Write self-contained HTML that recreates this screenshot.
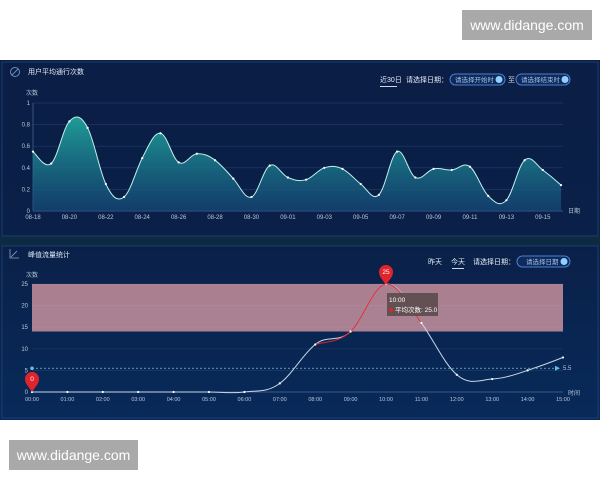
<!DOCTYPE html>
<html><head><meta charset="utf-8"><style>
html,body{margin:0;padding:0;background:#fff;width:600px;height:480px;overflow:hidden}
svg{display:block}
text{font-family:"Liberation Sans","Noto Sans CJK SC",sans-serif}
</style></head><body>
<svg id="s" width="600" height="480" viewBox="0 0 600 480" xmlns="http://www.w3.org/2000/svg">
<defs>
<linearGradient id="bg" x1="0" y1="0" x2="0" y2="1">
<stop offset="0" stop-color="#0b1e45"/><stop offset="0.5" stop-color="#0a2048"/><stop offset="1" stop-color="#082a5a"/></linearGradient>
<linearGradient id="ar" x1="0" y1="0" x2="0" y2="1">
<stop offset="0" stop-color="#1fa39a" stop-opacity="0.95"/><stop offset="1" stop-color="#164a7a" stop-opacity="0.7"/></linearGradient>
</defs>
<rect x="462" y="10" width="130" height="30" fill="#a9a9a9"/>
<text x="527" y="30" font-size="14" fill="#fff" text-anchor="middle">www.didange.com</text>
<rect x="9" y="440" width="129" height="30" fill="#a9a9a9"/>
<text x="73.5" y="460" font-size="14" fill="#fff" text-anchor="middle">www.didange.com</text>
<rect x="0" y="60" width="600" height="360" fill="url(#bg)"/>
<rect x="0" y="236" width="600" height="10" fill="#0d2d40" opacity="0.8"/>
<rect x="2" y="62" width="596" height="174" fill="none" stroke="#1b3c6e" stroke-width="1"/>
<rect x="2" y="246" width="596" height="172" fill="none" stroke="#1b3c6e" stroke-width="1"/>
<circle cx="15" cy="72" r="4.5" fill="none" stroke="#6f8fb8" stroke-width="1"/>
<path d="M12 75 L18 69" stroke="#6f8fb8"/>
<text x="28" y="74" font-size="7" fill="#dfe8f5">用户平均通行次数</text>
<text x="380" y="82" font-size="7" fill="#e8eef8">近30日</text>
<rect x="380" y="86" width="17" height="1" fill="#cfd8e6"/>
<text x="406" y="82" font-size="7" fill="#e8eef8">请选择日期：</text>
<rect x="450" y="74" width="55" height="11" rx="5.5" fill="#0f2a5a" stroke="#4c7fd0"/>
<text x="455" y="82" font-size="6.5" fill="#9fc0ea">请选择开始时</text>
<circle cx="499" cy="79.5" r="3.5" fill="#8fd0ff"/>
<text x="508" y="82" font-size="7" fill="#cfd8e6">至</text>
<rect x="516" y="74" width="54" height="11" rx="5.5" fill="#0f2a5a" stroke="#4c7fd0"/>
<text x="521" y="82" font-size="6.5" fill="#9fc0ea">请选择结束时</text>
<circle cx="565" cy="79.5" r="3.5" fill="#8fd0ff"/>
<text x="26" y="95" font-size="6" fill="#b8c6da">次数</text>
<g id="tg"></g>
<path d="M10 249 L10 258 L19 258 M11 257 L17 251" stroke="#8fa6c6" fill="none" stroke-width="0.8"/>
<text x="28" y="257" font-size="7" fill="#dfe8f5">峰值流量统计</text>
<text x="428" y="264" font-size="7" fill="#e8eef8">昨天</text>
<text x="451" y="264" font-size="7" fill="#e8eef8">今天</text>
<rect x="452" y="268" width="12" height="1" fill="#cfd8e6"/>
<text x="473" y="264" font-size="7" fill="#e8eef8">请选择日期：</text>
<rect x="517" y="256" width="53" height="11" rx="5.5" fill="#0f2a5a" stroke="#4c7fd0"/>
<text x="526" y="264" font-size="6.5" fill="#9fc0ea">请选择日期</text>
<circle cx="564" cy="261.5" r="3.5" fill="#8fd0ff"/>
<text x="26" y="277" font-size="6" fill="#b8c6da">次数</text>
<g id="bg2"></g>
</svg>
<script>
var NS="http://www.w3.org/2000/svg";
function el(p,t,a,txt){var e=document.createElementNS(NS,t);for(var k in a)e.setAttribute(k,a[k]);if(txt!=null)e.textContent=txt;p.appendChild(e);return e;}
function spline(pts){var d="M"+pts[0][0]+" "+pts[0][1];for(var i=0;i<pts.length-1;i++){var p0=pts[i-1]||pts[i],p1=pts[i],p2=pts[i+1],p3=pts[i+2]||p2;var t=0.18;var c1=[p1[0]+(p2[0]-p0[0])*t,p1[1]+(p2[1]-p0[1])*t*1.1],c2=[p2[0]-(p3[0]-p1[0])*t,p2[1]-(p3[1]-p1[1])*t*1.1];d+=" C"+c1[0].toFixed(1)+" "+c1[1].toFixed(1)+" "+c2[0].toFixed(1)+" "+c2[1].toFixed(1)+" "+p2[0].toFixed(1)+" "+p2[1].toFixed(1);}return d;}
var g=document.getElementById("tg");
var x0=33,x1=561,y1=103,y0=211;
for(var i=0;i<=5;i++){var y=y0-(y0-y1)*i/5;el(g,"line",{x1:x0,x2:563,y1:y,y2:y,stroke:i==0?"#4a6a95":"#1d3b66","stroke-width":0.7});el(g,"text",{x:x0-3,y:y+2,"font-size":6,fill:"#b8c6da","text-anchor":"end"},i==0?"0":i==5?"1":(i*0.2).toFixed(1));}
el(g,"line",{x1:x0,x2:x0,y1:y1,y2:y0,stroke:"#4a6a95","stroke-width":0.7});
var v=[.55,.44,.83,.77,.25,.13,.49,.72,.45,.53,.47,.30,.13,.42,.31,.29,.40,.39,.25,.15,.55,.31,.39,.38,.41,.14,.10,.47,.38,.24];
var st=(x1-x0)/29,pts=v.map(function(a,i){return[x0+i*st,y0-a*(y0-y1)]});
var d=spline(pts);
el(g,"path",{d:d+" L"+x1+" "+y0+" L"+x0+" "+y0+" Z",fill:"url(#ar)"});
el(g,"path",{d:d,fill:"none",stroke:"#bff0ee","stroke-width":1});
pts.forEach(function(p){el(g,"circle",{cx:p[0],cy:p[1],r:1.1,fill:"#fff"})});
var lab=["08-18","08-20","08-22","08-24","08-26","08-28","08-30","09-01","09-03","09-05","09-07","09-09","09-11","09-13","09-15"];
lab.forEach(function(s,i){el(g,"text",{x:x0+i*2*st,y:219,"font-size":6,fill:"#b8c6da","text-anchor":"middle"},s)});
el(g,"text",{x:568,y:213,"font-size":6,fill:"#b8c6da"},"日期");
var b=document.getElementById("bg2");
var X0=32,X1=563,Y25=284,Y0=392;
function yy(a){return Y0-a*(Y0-Y25)/25}
for(var i=0;i<=5;i++){var y=yy(i*5);el(b,"line",{x1:X0,x2:X1,y1:y,y2:y,stroke:i==0?"#4a6a95":"#1d3b66","stroke-width":0.7});el(b,"text",{x:X0-4,y:y+2,"font-size":6,fill:"#b8c6da","text-anchor":"end"},String(i*5));}
el(b,"rect",{x:X0,y:Y25,width:X1-X0,height:yy(14)-Y25,fill:"#e0a0a8",opacity:0.75});
var w=[0,0,0,0,0,0,0,2,11,14,25,16,4,3,5,8];
var s2=(X1-X0)/15,p2=w.map(function(a,i){return[X0+i*s2,yy(a)]});
var d2=spline(p2);
el(b,"path",{d:d2,fill:"none",stroke:"#c9d8ea","stroke-width":1});
el(b,"path",{d:spline(p2.slice(8,12)),fill:"none",stroke:"#e0262e","stroke-width":1});
p2.forEach(function(p){el(b,"circle",{cx:p[0],cy:p[1],r:1.1,fill:"#fff"})});
el(b,"line",{x1:X0,x2:555,y1:yy(5.5),y2:yy(5.5),stroke:"#7fb8d8","stroke-width":0.8,"stroke-dasharray":"2,2"});
el(b,"path",{d:"M555 "+(yy(5.5)-2.5)+" L560 "+yy(5.5)+" L555 "+(yy(5.5)+2.5)+"Z",fill:"#5fc0e0"});
el(b,"text",{x:563,y:yy(5.5)+2,"font-size":6,fill:"#b8c6da"},"5.5");
el(b,"circle",{cx:X0,cy:yy(5.5),r:1.8,fill:"#5fc0e0"});
["00:00","01:00","02:00","03:00","04:00","05:00","06:00","07:00","08:00","09:00","10:00","11:00","12:00","13:00","14:00","15:00"].forEach(function(s,i){el(b,"text",{x:X0+i*s2,y:401,"font-size":5.5,fill:"#b8c6da","text-anchor":"middle"},s)});
el(b,"text",{x:568,y:395,"font-size":6,fill:"#b8c6da"},"时间");
function pin(x,y,t){el(b,"path",{d:"M"+x+" "+y+" C"+(x-3)+" "+(y-5)+" "+(x-7)+" "+(y-8)+" "+(x-7)+" "+(y-13)+" A7 7 0 1 1 "+(x+7)+" "+(y-13)+" C"+(x+7)+" "+(y-8)+" "+(x+3)+" "+(y-5)+" "+x+" "+y+"Z",fill:"#e0242c"});el(b,"text",{x:x,y:y-11,"font-size":6.5,fill:"#fff","text-anchor":"middle"},t);}
pin(X0+10*s2,Y25+1,"25");pin(X0,Y0,"0");
el(b,"rect",{x:387,y:293,width:51,height:23,fill:"#5a4a4c",opacity:0.9});
el(b,"text",{x:389,y:302,"font-size":6.5,fill:"#fff"},"10:00");
el(b,"circle",{cx:391,cy:310,r:2,fill:"#e0242c"});
el(b,"text",{x:395,y:312,"font-size":6.5,fill:"#fff"},"平均次数: 25.0");
</script>
</body></html>
